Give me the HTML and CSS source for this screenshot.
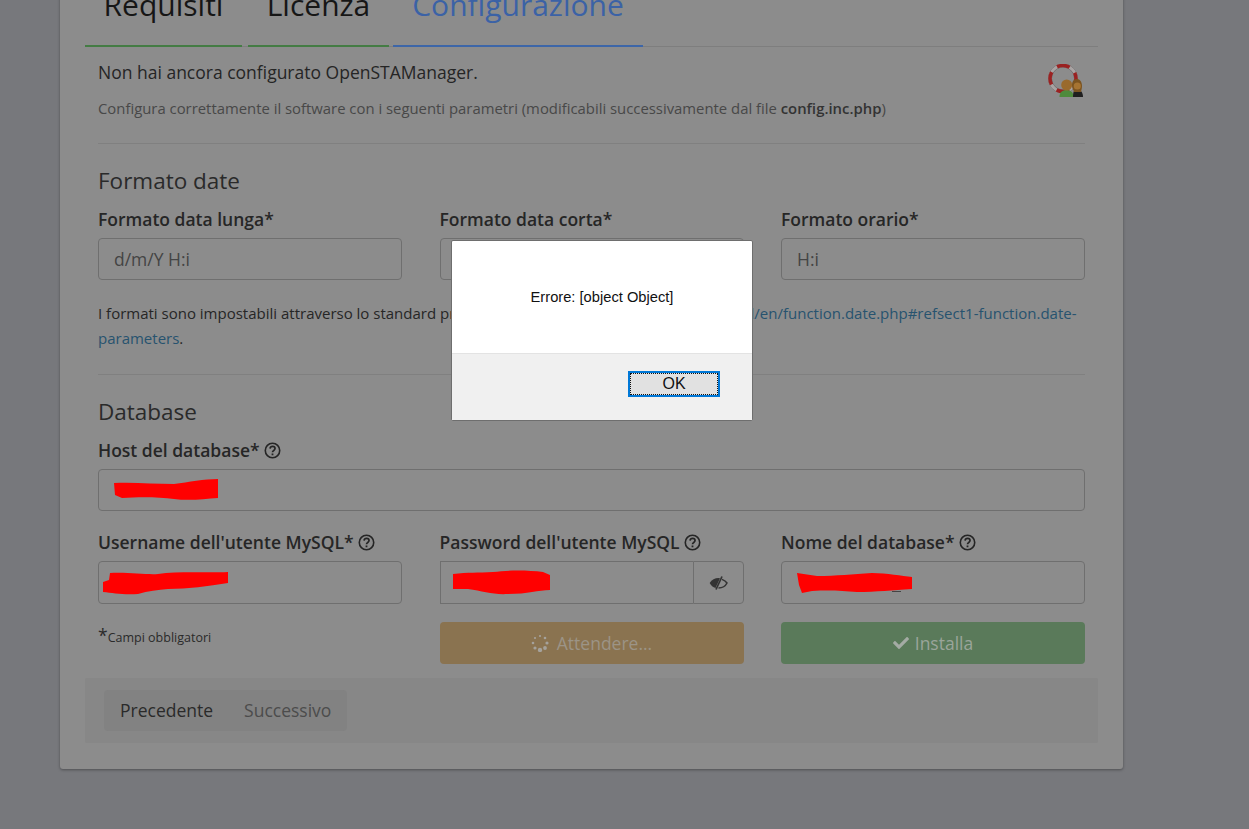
FILE: index.html
```html
<!DOCTYPE html>
<html lang="it">
<head>
<meta charset="utf-8">
<title>OpenSTAManager</title>
<link rel="stylesheet" href="styles.css">
</head>
<body>
<main class="card">
  <nav class="steps">
    <div class="step done w-req">Requisiti</div>
    <div class="step done w-lic">Licenza</div>
    <div class="step active w-conf">Configurazione</div>
  </nav>
  <section class="content">
    <div class="intro">
      <div>
        <p class="lead">Non hai ancora configurato OpenSTAManager.</p>
        <p class="sub">Configura correttamente il software con i seguenti parametri (modificabili successivamente dal file <b>config.inc.php</b>)</p>
      </div>
      <svg class="help-icon" width="38" height="36" viewBox="0 0 38 36">
        <circle cx="16" cy="14.500" r="14.500" fill="none" stroke="#6e6a6a" stroke-width="1"/>
        <circle cx="16" cy="14.500" r="11.500" fill="none" stroke="#6e6a6a" stroke-width="1"/>
        <circle cx="16" cy="14.500" r="13" fill="none" stroke="#a8a3a3" stroke-width="3"/>
        <circle cx="16" cy="14.500" r="13" fill="none" stroke="#9a2222" stroke-width="3.600" stroke-dasharray="13 7.420" stroke-dashoffset="6.500"/>
        <path d="M12.500 33c0-5 3-7 7-7s7 2 7 7z" fill="#4e8a3c"/>
        <circle cx="19.700" cy="21" r="5.500" fill="#9a6a2c"/>
        <path d="M26 33c0-5 1-8 4-8s6 3 6 8z" fill="#1f1f1f"/>
        <path d="M25 22c0-5 2-7 5-7s5 3 5 7c0 3-1 5-1 6h-7c0-2-2-3-2-6z" fill="#7c5420"/>
        <circle cx="30.300" cy="22" r="3.600" fill="#a67432"/>
      </svg>
    </div>
    <hr class="rule rule-top">
    <h4 class="group-title">Formato date</h4>
    <div class="grid three">
      <div class="field"><label>Formato data lunga*</label><div class="input">d/m/Y H:i</div></div>
      <div class="field"><label>Formato data corta*</label><div class="input">d/m/Y</div></div>
      <div class="field"><label>Formato orario*</label><div class="input">H:i</div></div>
    </div>
    <p class="note">I formati sono impostabili attraverso lo standard previsto da PHP: <a href="#">http://www.php.net/manual/en/function.date.php#refsect1-function.date-parameters</a>.</p>
    <hr class="rule rule-mid">
    <h4 class="group-title">Database</h4>
    <div class="field"><label>Host del database* <svg class="q" viewBox="0 0 16 16"><use href="#qmark"/></svg></label>
      <div class="input scribbled">
        <svg class="scribble s-host" viewBox="0 0 105 23"><path d="M0 5C20 4 40 6 60 6 75 4 90 1 104 1L104 20C90 21 75 23 60 21 45 19 25 19 8 20L1 17z"/></svg>
      </div>
    </div>
    <div class="grid three row-db">
      <div class="field"><label>Username dell'utente MySQL* <svg class="q" viewBox="0 0 16 16"><use href="#qmark"/></svg></label>
        <div class="input scribbled">
          <svg class="scribble s-user" viewBox="0 0 126 25"><path d="M0 12 6 10 7 3C25 2 45 5 55 4 75 1 105 3 125 2L125 13C105 16 85 19 65 19 55 20 45 21 35 24 20 25 10 23 0 22z"/></svg>
        </div>
      </div>
      <div class="field"><label>Password dell'utente MySQL <svg class="q" viewBox="0 0 16 16"><use href="#qmark"/></svg></label>
        <div class="input-group">
          <div class="input scribbled grow">
            <svg class="scribble s-pass" viewBox="0 0 97 25"><path d="M0 4C15 2 25 3 40 2 55 0 75 0 90 2L97 5V20C85 20 75 24 55 24 40 25 30 21 15 19H0z"/></svg>
          </div>
          <div class="addon">
            <svg class="eye" width="19" height="14" viewBox="0 0 19 14"><path d="M.7 7C2.700 3.500 6 2 9.500 2l1.500.2L6.500 12C4 11.200 2 9.500.7 7z" fill="#333"/><path d="M13 .5 7 13.500" stroke="#333" stroke-width="1.700" fill="none"/><path d="M13 3.400C15 4.100 17 5.400 18 7c-1.500 3-5 5-8.500 5" stroke="#333" stroke-width="1.500" fill="none"/></svg>
          </div>
        </div>
      </div>
      <div class="field"><label>Nome del database* <svg class="q" viewBox="0 0 16 16"><use href="#qmark"/></svg></label>
        <div class="input scribbled">
          <svg class="scribble s-name" viewBox="0 0 115 21"><rect class="ink" x="95" y="18" width="9" height="1"/><path d="M0 0 20 3C40 3 55 1 75 0 90 0 105 3 115 4V16C95 17 80 19 60 19 45 18 35 17 15 18L5 20 2 12z"/></svg>
        </div>
      </div>
    </div>
    <div class="grid three row-actions">
      <p class="required"><span class="star">*</span>Campi obbligatori</p>
      <button class="btn btn-wait" type="button">
        <svg class="spinner" width="18" height="18" viewBox="0 0 18 18"><g fill="#a5a29c"><circle cx="9" cy="16" r="2.200"/><circle cx="14" cy="14" r="1.900"/><circle cx="16" cy="9" r="1.600"/><circle cx="14" cy="4" r="1.300"/><circle cx="9" cy="2" r="1.100"/><circle cx="4" cy="4" r="1.100"/><circle cx="2" cy="9" r="1.300"/><circle cx="4" cy="14" r="1.600"/></g></svg>
        Attendere...
      </button>
      <button class="btn btn-go" type="button">
        <svg width="16" height="16" viewBox="0 0 512 512"><path fill="#a4aba4" d="M173.898 439.404l-166.4-166.4c-9.997-9.997-9.997-26.206 0-36.204l36.203-36.204c9.997-9.998 26.207-9.998 36.204 0L192 312.69 432.095 72.596c9.997-9.997 26.207-9.997 36.204 0l36.203 36.204c9.997 9.997 9.997 26.206 0 36.204l-294.4 294.401c-9.998 9.997-26.207 9.997-36.204-.001z"/></svg>
        Installa
      </button>
    </div>
  </section>
  <footer class="wizard-foot">
    <div class="pager"><span class="prev">Precedente</span><span class="next">Successivo</span></div>
  </footer>
</main>

<svg class="defs" width="0" height="0"><defs>
  <g id="qmark" fill="none" stroke="#252525" stroke-width="1.500"><circle cx="8" cy="8" r="6.800"/><path d="M5.700 6.200C5.900 4.800 7 4.200 8.100 4.200c1.300 0 2.300.8 2.300 2 0 1.800-2.400 1.700-2.400 3.500" stroke-width="1.600"/><path d="M8 10.800v1.700" stroke-width="1.700"/></g>
</defs></svg>

<div class="dialog" role="alertdialog">
  <div class="dialog-body">Errore: [object Object]</div>
  <div class="dialog-foot"><button class="ok" type="button"><span>OK</span></button></div>
</div>
</body>
</html>
```
FILE: styles.css
```css
* { box-sizing: border-box; }
html, body { margin: 0; height: 829px; overflow: hidden; }
body {
  position: relative;
  background: #77787c;
  font-family: "Open Sans", sans-serif;
  color: #2a2a2a;
  font-size: 16.5px;
}
.card {
  width: 1063px;
  height: 809px;
  margin: -40px 0 0 60px;
  background: #8c8c8c;
  border-radius: 3px;
  box-shadow: 0 1px 3px rgba(0,0,0,.35);
  display: flex;
  flex-direction: column;
}
.steps {
  margin: 0 25px;
  height: 87px;
  display: flex;
  border-bottom: 1px solid #7e7e7e;
  align-items: flex-end;
}
.step {
  height: 87px;
  padding-top: 26px;
  font-size: 30px;
  line-height: 38px;
  text-align: center;
  color: #161616;
  border-bottom: 2px solid #447c44;
  margin-bottom: -1px;
}
.w-req { width: 157px; margin-right: 6px; }
.w-lic { width: 141px; margin-right: 4px; }
.w-conf { width: 250px; color: #3b62a6; border-bottom-color: #3d66a8; }
.content { padding: 0 38px; height: 631px; }
.intro { display: flex; justify-content: space-between; }
.lead { margin: 13px 0 0; font-size: 17.5px; line-height: 24px; color: #252525; }
.sub { margin: 14px 0 0; font-size: 14.875px; line-height: 20px; color: #484848; }
.sub b { font-weight: 600; color: #333; }
.help-icon { margin: 17px 0 0 0; flex: none; }
.rule { border: 0; border-top: 1px solid #808080; margin: 0; }
.rule-top { margin-top: 25px; }
.rule-mid { margin-top: 23px; }
.group-title { margin: 22px 0 11px; font-size: 22.5px; line-height: 30px; font-weight: 400; color: #2a2a2a; }
.grid.three { display: grid; grid-template-columns: 304px 304px 304px; column-gap: 37.5px; }
label { display: block; font-weight: 600; font-size: 17.5px; line-height: 24px; color: #262626; margin-bottom: 7px; }
.q { width: 17px; height: 17px; vertical-align: -2px; }
.input {
  height: 42px;
  border: 1px solid #6f6f6f;
  border-radius: 4px;
  padding: 0 15px;
  font-size: 17.5px;
  line-height: 40px;
  color: #444;
}
.scribbled { position: relative; }
.scribble { position: absolute; display: block; }
.scribble path { fill: #f00; }
.scribble .ink { fill: #444; }
.s-host { left: 15px; top: 8px; width: 105px; height: 23px; }
.s-user { left: 4px; top: 8px; width: 126px; height: 25px; }
.s-pass { left: 12px; top: 8px; width: 97px; height: 25px; }
.s-name { left: 15px; top: 11px; width: 115px; height: 21px; }
.note { margin: 21px 0 0; font-size: 15px; line-height: 25px; color: #262626; }
.note a { color: #27536f; text-decoration: none; }
.row-db { margin-top: 19px; }
.row-db .input { height: 43px; line-height: 41px; }
.input-group { display: flex; }
.grow { flex: 1; border-radius: 0; border-right: 0; }
.addon { width: 51px; height: 43px; border: 1px solid #6f6f6f; border-radius: 0 4px 4px 0; display: flex; align-items: center; justify-content: center; }
.row-actions { margin-top: 18px; }
.required { margin: 1px 0 0; font-size: 12.5px; line-height: 24px; color: #2a2a2a; }
.star { font-size: 17.5px; }
.btn {
  height: 42px;
  border: 1px solid transparent;
  border-radius: 4px;
  font: 17.5px "Open Sans", sans-serif;
  display: flex;
  align-items: center;
  justify-content: center;
  gap: 6px;
  padding: 0;
}
.btn-wait { background: #8a7350; color: #9c9486; gap: 8px; }
.btn-go { background: #5a7a5a; color: #9aa59a; }
.wizard-foot { margin: 0 25px; height: 65px; background: #878787; padding: 12px 19px; border-radius: 2px; }
.pager { display: inline-flex; height: 41px; background: #828282; border-radius: 4px; font-size: 17.5px; line-height: 41px; }
.prev { padding: 0 15px 0 16px; color: #2a2a2a; }
.next { padding: 0 16px; color: #4c4c4c; }
.defs { position: absolute; }
.dialog {
  position: absolute;
  left: 451px;
  top: 240px;
  width: 302px;
  height: 181px;
  border: 1px solid #6e6e6e;
  border-radius: 2px;
  background: #fff;
  display: flex;
  flex-direction: column;
  font-family: "Liberation Sans", Arial, sans-serif;
}
.dialog-body { height: 112px; display: flex; align-items: center; justify-content: center; font-size: 14.7px; color: #111; }
.dialog-foot { flex: 1; background: #f0f0f0; border-top: 1px solid #e3e3e3; display: flex; justify-content: flex-end; padding: 17px 32px 0 0; }
.ok { width: 92px; height: 26px; background: #e1e1e1; border: 2px solid #0078d7; padding: 0; font: 16px "Liberation Sans", Arial, sans-serif; color: #111; outline: 1px dotted #111; outline-offset: -3px; }
```
